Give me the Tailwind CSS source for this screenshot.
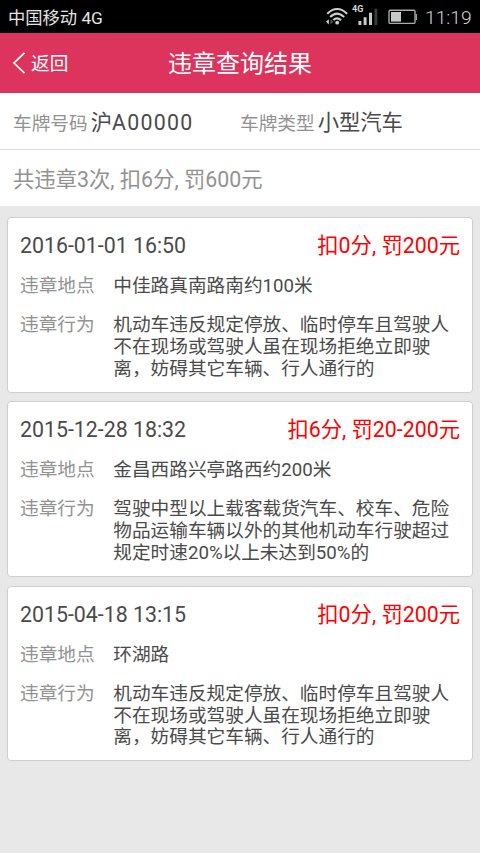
<!DOCTYPE html>
<html lang="zh-CN">
<head>
<meta charset="utf-8">
<title>违章查询结果</title>
<script src="https://cdn.jsdelivr.net/npm/@tailwindcss/browser@4"></script>
</head>
<body class="w-[480px] h-[853px] overflow-hidden bg-[#e8e8e8] font-[Roboto,'Noto_Sans_CJK_SC',sans-serif] text-[#4a4a4a] text-[18.67px] whitespace-nowrap">
<header class="h-[33px] bg-black text-[#d4d4d4] flex items-center pl-[8px] pr-[8px]">
  <span class="text-[17.3px] leading-[36px] text-[#e4e4e4] h-[33px]">中国移动 4G</span>
  <svg class="ml-auto" width="92" height="33" viewBox="0 0 92 33" fill="none">
    <g stroke="#d0d0d0" stroke-width="2.1">
      <path d="M2.2 13.8 Q12 4.2 22.2 13.8"/><path d="M5.2 17 Q12 10.3 19.2 17"/><path d="M8.3 20.1 Q12 16.7 16 20.1"/>
    </g>
    <circle cx="12.2" cy="22.7" r="1.9" fill="#d0d0d0"/>
    <path d="M3.8 19.2v5.2L1 21.8z" fill="#d0d0d0"/><path d="M5.5 19.2v5.2l2.8-2.6z" fill="#555"/>
    <text x="27" y="12.4" font-family="Roboto" font-size="9" font-weight="700" fill="#d8d8d8">4G</text>
    <g fill="#c8c8c8"><rect x="33.4" y="21" width="3" height="4"/><rect x="38.6" y="17.2" width="3" height="7.8"/><rect x="44" y="12.7" width="3" height="12.3"/><rect x="49.5" y="8.7" width="2.8" height="16.3" fill="#3c3c3c"/></g>
    <rect x="64" y="10.2" width="26" height="13.2" rx="1.2" stroke="#aaa" stroke-width="1.4"/>
    <rect x="66" y="12" width="10" height="9.6" fill="#c8c8c8"/><path d="M91.3 14v6" stroke="#999" stroke-width="1.4"/>
  </svg>
  <span class="ml-[8px] w-[47px] text-[19.2px] font-light leading-[35px] h-[33px]">11:19</span>
</header>
<nav class="h-[60px] bg-[#dc345c] text-white grid grid-cols-[168px_144px_168px] items-center">
  <div class="flex items-center pl-[12px]">
    <svg width="14" height="24" viewBox="0 0 14 24" fill="none" stroke="white" stroke-width="1.7"><path d="M12.5 1.8 2 12l10.5 10.2"/></svg>
    <span class="ml-[5px] pt-[2px] leading-[28px]">返回</span>
  </div>
  <h1 class="text-[24px] leading-[36px] pt-[2px] text-center">违章查询结果</h1>
</nav>
<section class="bg-white h-[57px] border-b border-[#e0e0e0] grid grid-cols-[227px_1fr] pl-[13px]">
  <div class="flex items-baseline leading-[59px]"><span class="text-[#929292]">车牌号码</span><span class="ml-[3px] text-[21.33px]">沪<span class="tracking-[1.3px]">A00000</span></span></div>
  <div class="flex items-baseline leading-[59px]"><span class="text-[#929292]">车牌类型</span><span class="ml-[3px] text-[21.33px]">小型汽车</span></div>
</section>
<section class="bg-white h-[56px] pl-[13px] text-[21.33px] leading-[59px] text-[#929292]">共违章3次, 扣6分, 罚600元</section>
<main class="px-[7px] pt-[11px] flex flex-col gap-[8.8px]">
  <article class="h-[175.6px] bg-white border-[1.4px] border-[#cfcfcf] rounded-[4px] pt-[13px] px-[12px]">
    <div class="flex justify-between text-[21.33px] leading-[30px]"><span>2016-01-01 16:50</span><span class="text-[#ff0000]">扣0分, 罚200元</span></div>
    <dl class="mt-[15px] grid grid-cols-[93.3px_1fr] gap-y-[17.2px] leading-[21.8px]">
      <dt class="text-[#929292]">违章地点</dt><dd>中佳路真南路南约100米</dd>
      <dt class="text-[#929292]">违章行为</dt><dd>机动车违反规定停放、临时停车且驾驶人<br>不在现场或驾驶人虽在现场拒绝立即驶<br>离，妨碍其它车辆、行人通行的</dd>
    </dl>
  </article>
  <article class="h-[175.6px] bg-white border-[1.4px] border-[#cfcfcf] rounded-[4px] pt-[13px] px-[12px]">
    <div class="flex justify-between text-[21.33px] leading-[30px]"><span>2015-12-28 18:32</span><span class="text-[#ff0000]">扣6分, 罚20-200元</span></div>
    <dl class="mt-[15px] grid grid-cols-[93.3px_1fr] gap-y-[17.2px] leading-[21.8px]">
      <dt class="text-[#929292]">违章地点</dt><dd>金昌西路兴亭路西约200米</dd>
      <dt class="text-[#929292]">违章行为</dt><dd>驾驶中型以上载客载货汽车、校车、危险<br>物品运输车辆以外的其他机动车行驶超过<br>规定时速20%以上未达到50%的</dd>
    </dl>
  </article>
  <article class="h-[175.6px] bg-white border-[1.4px] border-[#cfcfcf] rounded-[4px] pt-[13px] px-[12px]">
    <div class="flex justify-between text-[21.33px] leading-[30px]"><span>2015-04-18 13:15</span><span class="text-[#ff0000]">扣0分, 罚200元</span></div>
    <dl class="mt-[15px] grid grid-cols-[93.3px_1fr] gap-y-[17.2px] leading-[21.8px]">
      <dt class="text-[#929292]">违章地点</dt><dd>环湖路</dd>
      <dt class="text-[#929292]">违章行为</dt><dd>机动车违反规定停放、临时停车且驾驶人<br>不在现场或驾驶人虽在现场拒绝立即驶<br>离，妨碍其它车辆、行人通行的</dd>
    </dl>
  </article>
</main>
</body>
</html>
